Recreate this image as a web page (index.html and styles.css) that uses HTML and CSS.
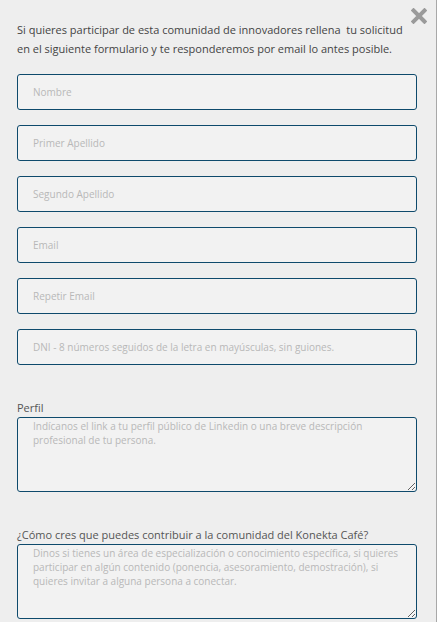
FILE: index.html
```html
<!DOCTYPE html>
<html lang="es">
<head>
    <meta charset="UTF-8">
    <meta name="viewport" content="width=device-width, initial-scale=1.0">
    <title>Konekta Café</title>
    <link rel="stylesheet" href="styles.css">
</head>
<body>
    <div class="modal">
        <span class="close">
            <svg width="16" height="16" viewBox="0 0 16 16">
                <path d="M2.5 2.5 L13.5 13.5 M13.5 2.5 L2.5 13.5" stroke="#9a9a9a" stroke-width="4" stroke-linecap="square"/>
            </svg>
        </span>
        <p class="intro">Si quieres participar de esta comunidad de innovadores rellena &nbsp;tu solicitud en el siguiente formulario y te responderemos por email lo antes posible.</p>
        <form class="form">
            <input type="text" placeholder="Nombre">
            <input type="text" placeholder="Primer Apellido">
            <input type="text" placeholder="Segundo Apellido">
            <input type="email" placeholder="Email">
            <input type="email" placeholder="Repetir Email">
            <input type="text" placeholder="DNI - 8 números seguidos de la letra en mayúsculas, sin guiones.">

            <div class="field">
                <label>Perfil</label>
                <textarea placeholder="Indícanos el link a tu perfil público de Linkedin o una breve descripción profesional de tu persona."></textarea>
            </div>
            <div class="field">
                <label>¿Cómo cres que puedes contribuir a la comunidad del Konekta Café?</label>
                <textarea placeholder="Dinos si tienes un área de especialización o conocimiento específica, si quieres participar en algún contenido (ponencia, asesoramiento, demostración), si quieres invitar a alguna persona a conectar."></textarea>
            </div>
        </form>
    </div>
</body>
</html>
```

FILE: styles.css
```css
* {
    box-sizing: border-box;
}

body {
    margin: 0;
    background-color: #eeeeee;
    font-family: "Open Sans", sans-serif;
    overflow: hidden;
}

.modal {
    position: relative;
    height: 622px;
    padding: 20px 20px 0 17px;
    border-right: 1px solid #a8a8a8;
}

.close {
    position: absolute;
    top: 7px;
    right: 9px;
}

.intro {
    margin: 0;
    font-size: 11px;
    line-height: 19px;
    color: #444;
}

.form {
    margin-top: 16px;
}

input,
textarea {
    display: block;
    width: 400px;
    border: 1px solid #0e4a6c;
    border-radius: 3px;
    background-color: #f2f2f2;
    font-family: "Open Sans", sans-serif;
    font-size: 10px;
    color: #444;
    padding-left: 15px;
    outline: none;
}

input {
    height: 36px;
    margin-bottom: 15px;
}

textarea {
    height: 75px;
    padding-top: 1px;
    line-height: 14px;
    resize: vertical;
}

::placeholder {
    color: #b8b8b8;
}

.field {
    margin-top: 34px;
}

label {
    display: block;
    font-size: 11px;
    line-height: 18px;
    color: #555;
}
```
